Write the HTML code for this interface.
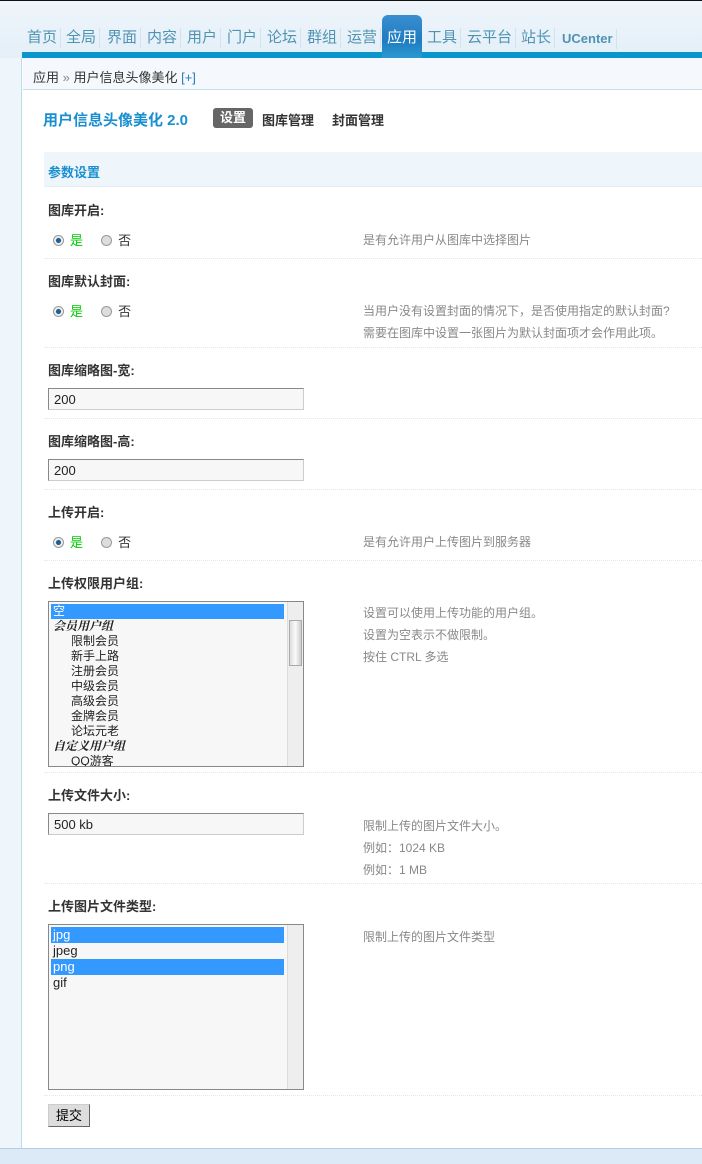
<!DOCTYPE html>
<html><head><meta charset="utf-8"><style>
*{margin:0;padding:0;box-sizing:border-box}
body{width:702px;height:1164px;position:relative;overflow:hidden;background:#fff;font:12px "Liberation Sans","Noto Sans CJK SC",sans-serif;color:#333}
.a{position:absolute;white-space:nowrap}
.top{left:0;top:0;width:702px;height:58px;background:linear-gradient(#eef5fb,#e4eff8);border-top:1px solid #111}
.n{top:28px;font-size:15px;color:#4f93b3;line-height:20px;border-right:1px solid #d2e3ee;padding-right:3px}
.act{left:382px;top:15px;width:40px;height:43px;background:linear-gradient(#3a8fd0,#1e7cc0 60%,#2a9ad2);border-radius:6px 6px 0 0;color:#fff;font-size:15px;text-align:center;line-height:46px}
.bar{left:22px;top:52px;width:680px;height:6px;background:#0a95cc}
.side{left:0;top:58px;width:22px;height:1090px;background:#eef5fb;border-right:1px solid #bcdcf0}
.bc{left:23px;top:58px;width:679px;height:32px;background:#f5f9fd;border-bottom:1px solid #c4dfe6;padding:9px 0 0 10px;color:#333;font-size:13px}
.lbl{left:48px;font-weight:bold;color:#333;font-size:13px}
.hr{left:44px;width:658px;height:0;border-top:1px dotted #dde9ee}
.desc{left:363px;color:#888;line-height:22px}
.inp{left:48px;width:256px;height:22px;border:1px solid #999;border-color:#888 #ccc #ccc #888;background:#f7f7f7;padding:3px 5px;font-size:13px;color:#222}
.r{display:inline-block;width:11px;height:11px;border-radius:50%;border:1px solid #999;background:#ddd;vertical-align:-1px;margin-right:6px}
.r.on{background:radial-gradient(#1a5e94 35%,#eee 45%)}
.sel{left:48px;width:256px;border:1px solid #888;background:#f7f7f7;overflow:hidden;font-size:12px;line-height:15px;color:#222}
.sb{position:absolute;right:0;top:0;width:16px;height:100%;background:#eee;border-left:1px solid #ddd}
.hl{background:#3399ff;color:#fff;margin:2px 19px 0 2px;padding-left:2px}
</style></head><body>
<div class="a top"></div>
<div class="a n" style="left:27px">首页</div>
<div class="a n" style="left:66px">全局</div>
<div class="a n" style="left:107px">界面</div>
<div class="a n" style="left:147px">内容</div>
<div class="a n" style="left:187px">用户</div>
<div class="a n" style="left:227px">门户</div>
<div class="a n" style="left:267px">论坛</div>
<div class="a n" style="left:307px">群组</div>
<div class="a n" style="left:347px">运营</div>
<div class="a n" style="left:427px">工具</div>
<div class="a n" style="left:467px">云平台</div>
<div class="a n" style="left:521px">站长</div>
<div class="a n" style="left:562px;font-size:13px;font-weight:bold;top:29px">UCenter</div>
<div class="a bar"></div>
<div class="a act">应用</div>
<div class="a side"></div>
<div class="a bc">应用 <span style="color:#888">»</span> 用户信息头像美化 <span style="color:#2c7ab6">[+]</span></div>
<div class="a" style="left:43px;top:109px;font-size:15px;font-weight:bold;color:#1a8fd0">用户信息头像美化 2.0</div>
<div class="a" style="left:213px;top:108px;width:40px;height:20px;background:#666;border-radius:3px;color:#fff;font-weight:bold;font-size:13px;text-align:center;line-height:20px">设置</div>
<div class="a" style="left:262px;top:110px;font-weight:bold;font-size:13px">图库管理</div>
<div class="a" style="left:332px;top:110px;font-weight:bold;font-size:13px">封面管理</div>
<div class="a" style="left:44px;top:152px;width:658px;height:35px;background:#eef5fb;border-bottom:1px solid #e4eef2;padding:10px 4px;font-weight:bold;color:#1a8fd0;font-size:13px">参数设置</div>

<div class="a lbl" style="top:200px">图库开启:</div>
<div class="a" style="left:53px;top:230px;font-size:13px"><i class="r on"></i><span style="color:#0c0">是</span>&nbsp;&nbsp;&nbsp;&nbsp;&nbsp;<i class="r"></i>否</div>
<div class="a desc" style="top:229px">是有允许用户从图库中选择图片</div>
<div class="a hr" style="top:258px"></div>

<div class="a lbl" style="top:271px">图库默认封面:</div>
<div class="a" style="left:53px;top:301px;font-size:13px"><i class="r on"></i><span style="color:#0c0">是</span>&nbsp;&nbsp;&nbsp;&nbsp;&nbsp;<i class="r"></i>否</div>
<div class="a desc" style="top:300px">当用户没有设置封面的情况下，是否使用指定的默认封面?<br>需要在图库中设置一张图片为默认封面项才会作用此项。</div>
<div class="a hr" style="top:347px"></div>

<div class="a lbl" style="top:360px">图库缩略图-宽:</div>
<div class="a inp" style="top:388px">200</div>
<div class="a hr" style="top:418px"></div>

<div class="a lbl" style="top:431px">图库缩略图-高:</div>
<div class="a inp" style="top:459px">200</div>
<div class="a hr" style="top:489px"></div>

<div class="a lbl" style="top:502px">上传开启:</div>
<div class="a" style="left:53px;top:532px;font-size:13px"><i class="r on"></i><span style="color:#0c0">是</span>&nbsp;&nbsp;&nbsp;&nbsp;&nbsp;<i class="r"></i>否</div>
<div class="a desc" style="top:531px">是有允许用户上传图片到服务器</div>
<div class="a hr" style="top:560px"></div>

<div class="a lbl" style="top:573px">上传权限用户组:</div>
<div class="a sel" style="top:601px;height:166px">
<div class="hl">空</div>
<div style="padding-left:4px;font-weight:bold;font-style:italic;font-family:'Liberation Serif','Noto Serif CJK SC',serif">会员用户组</div>
<div style="padding-left:22px">限制会员<br>新手上路<br>注册会员<br>中级会员<br>高级会员<br>金牌会员<br>论坛元老</div>
<div style="padding-left:4px;font-weight:bold;font-style:italic;font-family:'Liberation Serif','Noto Serif CJK SC',serif">自定义用户组</div>
<div style="padding-left:22px">QQ游客</div>
<div class="sb"><div style="position:absolute;left:1px;top:18px;width:13px;height:46px;background:linear-gradient(90deg,#ddd,#fafafa,#ccc);border:1px solid #aaa"></div></div>
</div>
<div class="a desc" style="top:602px">设置可以使用上传功能的用户组。<br>设置为空表示不做限制。<br>按住 CTRL 多选</div>
<div class="a hr" style="top:772px"></div>

<div class="a lbl" style="top:785px">上传文件大小:</div>
<div class="a inp" style="top:813px">500 kb</div>
<div class="a desc" style="top:815px">限制上传的图片文件大小。<br>例如：1024 KB<br>例如：1 MB</div>
<div class="a hr" style="top:883px"></div>

<div class="a lbl" style="top:896px">上传图片文件类型:</div>
<div class="a sel" style="top:924px;height:166px;font-size:13px;line-height:16px">
<div class="hl">jpg</div>
<div style="padding-left:4px">jpeg</div>
<div class="hl" style="margin-top:0">png</div>
<div style="padding-left:4px">gif</div>
<div class="sb"></div>
</div>
<div class="a desc" style="top:926px">限制上传的图片文件类型</div>
<div class="a hr" style="top:1095px"></div>

<div class="a" style="left:48px;top:1104px;width:42px;height:23px;background:#ddd;border:1px solid #999;border-color:#ccc #666 #666 #ccc;text-align:center;line-height:21px;font-size:13px;color:#000">提交</div>
<div class="a" style="left:0;top:1148px;width:702px;height:16px;background:#dce9f6;border-top:1px solid #b9cde0"></div>
</body></html>
